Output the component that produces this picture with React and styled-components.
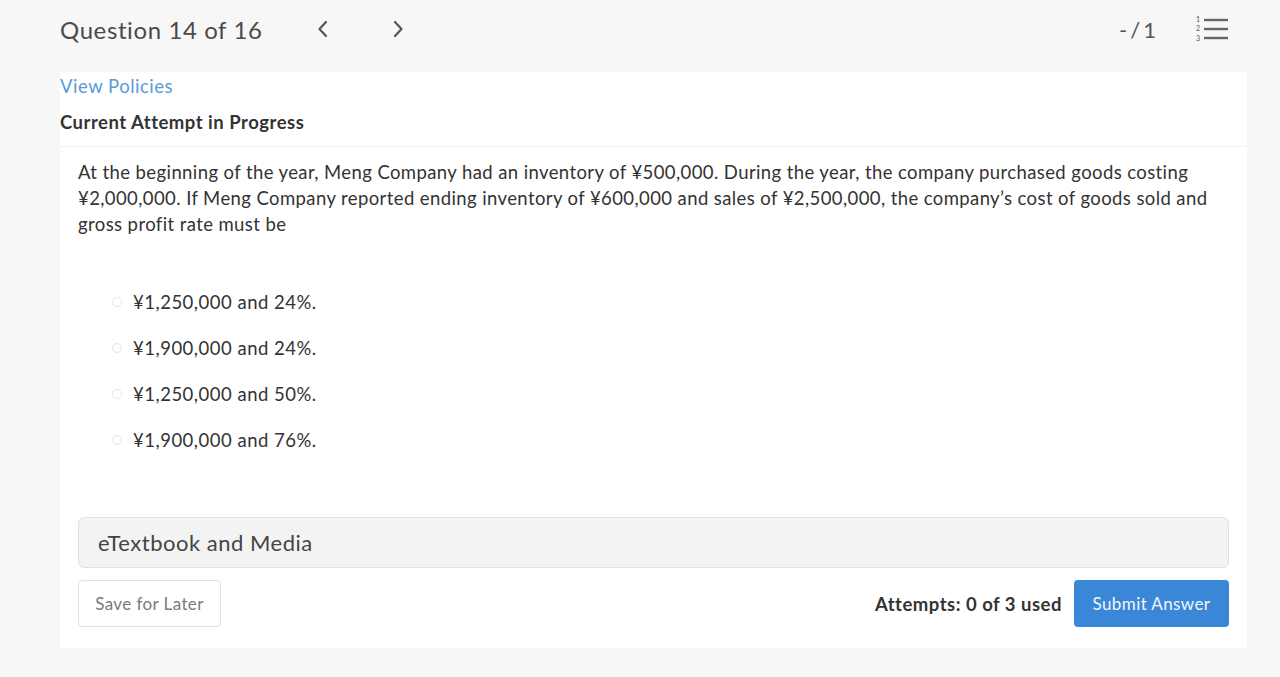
import React from 'react';
import styled, { createGlobalStyle } from 'styled-components';

const GlobalStyle = createGlobalStyle`
  html, body {
    margin: 0;
    padding: 0;
    background: #f7f7f7;
    font-family: Lato, "Open Sans", "Liberation Sans", sans-serif;
    color: #333;
  }
`;

const Page = styled.div`
  width: 1280px;
  height: 677px;
  padding: 0 33px 0 60px;
  box-sizing: border-box;
  overflow: hidden;
`;

const TopBar = styled.div`
  height: 72px;
  display: flex;
  align-items: center;
  padding-right: 18px;
`;

const Title = styled.div`
  font-size: 24px;
  letter-spacing: 0.6px;
  color: #4a4a4a;
  margin-top: -14px;
`;

const NavButton = styled.button`
  border: 0;
  background: none;
  padding: 0;
  margin-top: -14px;
  margin-left: ${(p) => p.$gap}px;
  display: flex;
  align-items: center;
  color: #555;
  cursor: pointer;
`;

const Spacer = styled.div`
  flex: 1;
`;

const Score = styled.div`
  font-size: 22px;
  color: #555;
  margin-top: -14px;
  letter-spacing: 3px;
`;

const ListIcon = styled.div`
  margin-left: 36px;
  margin-top: -14px;
  display: flex;
`;

const Panel = styled.div`
  background: #fff;
  height: 576px;
  display: flex;
  flex-direction: column;
`;

const PanelHead = styled.div`
  padding: 2px 0 0;
  border-bottom: 1px solid #f0f0f0;
  height: 75px;
  box-sizing: border-box;
`;

const PolicyLink = styled.a`
  display: block;
  font-size: 18.5px;
  letter-spacing: 0.5px;
  color: #5a9bd8;
  text-decoration: none;
  line-height: 24px;
`;

const AttemptLabel = styled.div`
  font-size: 18.5px;
  letter-spacing: 0.5px;
  font-weight: 700;
  color: #333;
  margin-top: 12px;
  line-height: 24px;
`;

const Body = styled.div`
  padding: 12px 18px 0 18px;
  flex: 1;
  display: flex;
  flex-direction: column;
`;

const Question = styled.p`
  margin: 0;
  font-size: 18.5px;
  letter-spacing: 0.4px;
  line-height: 26px;
  color: #333;
  padding-right: 8px;
`;

const Options = styled.div`
  margin-top: 53px;
  padding-left: 34px;
  display: flex;
  flex-direction: column;
  gap: 22px;
`;

const Option = styled.label`
  display: flex;
  align-items: center;
  font-size: 18.5px;
  letter-spacing: 0.5px;
  line-height: 24px;
  color: #333;
  gap: 11px;
`;

const Radio = styled.span`
  width: 10px;
  height: 10px;
  border-radius: 50%;
  border: 1px solid #e4e4e4;
  box-sizing: border-box;
`;

const MediaBar = styled.div`
  margin-top: 65px;
  height: 51px;
  background: #f3f3f3;
  border: 1px solid #e2e2e2;
  border-radius: 6px;
  display: flex;
  align-items: center;
  padding-left: 19px;
  font-size: 22px;
  letter-spacing: 0.5px;
  color: #444;
  box-sizing: border-box;
`;

const Footer = styled.div`
  margin-top: 12px;
  display: flex;
  align-items: center;
`;

const SaveButton = styled.button`
  height: 47px;
  width: 143px;
  background: #fff;
  border: 1px solid #e0e0e0;
  border-radius: 4px;
  font-family: inherit;
  font-size: 17px;
  letter-spacing: 0.4px;
  color: #7a7a7a;
`;

const Attempts = styled.div`
  margin-left: auto;
  font-size: 18.5px;
  letter-spacing: 0.5px;
  font-weight: 700;
  color: #333;
  margin-right: 12px;
`;

const SubmitButton = styled.button`
  height: 47px;
  width: 155px;
  background: #3a87d8;
  border: 0;
  border-radius: 4px;
  font-family: inherit;
  font-size: 17px;
  letter-spacing: 0.4px;
  color: #f2f7fd;
`;

const Chevron = ({ dir }) => (
  <svg width="14" height="20" viewBox="0 0 14 20" fill="none">
    <path
      d={dir === 'left' ? 'M10 3 L3.5 10 L10 17' : 'M4 3 L10.5 10 L4 17'}
      stroke="#555"
      strokeWidth="2.2"
      strokeLinecap="round"
      strokeLinejoin="round"
    />
  </svg>
);

const NumberedList = () => (
  <svg width="34" height="28" viewBox="0 0 34 28">
    <g stroke="#666" strokeWidth="2.4">
      <line x1="9" y1="5" x2="33" y2="5" />
      <line x1="9" y1="14" x2="33" y2="14" />
      <line x1="9" y1="23" x2="33" y2="23" />
    </g>
    <g fill="#555" fontSize="7" fontFamily="Lato, sans-serif">
      <text x="1" y="7">1</text>
      <text x="1" y="16">2</text>
      <text x="1" y="26">3</text>
    </g>
  </svg>
);

const options = [
  '¥1,250,000 and 24%.',
  '¥1,900,000 and 24%.',
  '¥1,250,000 and 50%.',
  '¥1,900,000 and 76%.',
];

const App = () => (
  <>
    <GlobalStyle />
    <Page>
      <TopBar>
        <Title>Question 14 of 16</Title>
        <NavButton $gap={54}>
          <Chevron dir="left" />
        </NavButton>
        <NavButton $gap={61}>
          <Chevron dir="right" />
        </NavButton>
        <Spacer />
        <Score>-/1</Score>
        <ListIcon>
          <NumberedList />
        </ListIcon>
      </TopBar>
      <Panel>
        <PanelHead>
          <PolicyLink href="#">View Policies</PolicyLink>
          <AttemptLabel>Current Attempt in Progress</AttemptLabel>
        </PanelHead>
        <Body>
          <Question>
            At the beginning of the year, Meng Company had an inventory of ¥500,000. During the year, the company
            purchased goods costing ¥2,000,000. If Meng Company reported ending inventory of ¥600,000 and sales of
            ¥2,500,000, the company’s cost of goods sold and gross profit rate must be
          </Question>
          <Options>
            {options.map((o) => (
              <Option key={o}>
                <Radio />
                {o}
              </Option>
            ))}
          </Options>
          <MediaBar>eTextbook and Media</MediaBar>
          <Footer>
            <SaveButton>Save for Later</SaveButton>
            <Attempts>Attempts: 0 of 3 used</Attempts>
            <SubmitButton>Submit Answer</SubmitButton>
          </Footer>
        </Body>
      </Panel>
    </Page>
  </>
);

export default App;
